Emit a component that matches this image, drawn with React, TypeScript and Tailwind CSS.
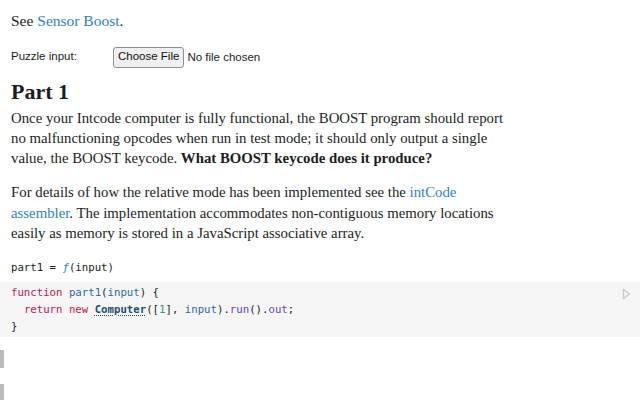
export default function App() {
  return (
    <div className="w-[640px] h-[400px] overflow-hidden bg-white text-[#1b1e23]">
      <div className="px-[11px] font-['Liberation_Serif',serif]">
        <p className="pt-[11px] text-[15.5px] leading-[20px]">
          See <a className="text-[#3182bd]">Sensor Boost</a>.
        </p>
        <div className="mt-[15px] flex items-center h-[22px] font-['Liberation_Sans',sans-serif] text-[11.5px]">
          <label className="w-[102px]">Puzzle input:</label>
          <input
            type="file"
            className="text-[11.5px] font-['Liberation_Sans',sans-serif] file:mr-[3px] file:h-[21px] file:px-[4px] file:border file:border-[#8f8f8f] file:rounded-[3px] file:bg-[#efefef] file:text-[#111]"
          />
        </div>
        <h2 className="mt-[10px] text-[22px] leading-[28px] font-bold">Part 1</h2>
        <p className="mt-[2px] text-[14.8px] leading-[20px] whitespace-nowrap">
          Once your Intcode computer is fully functional, the BOOST program should report
          <br />
          no malfunctioning opcodes when run in test mode; it should only output a single
          <br />
          value, the BOOST keycode. <b>What BOOST keycode does it produce?</b>
        </p>
        <p className="mt-[14px] text-[14.8px] leading-[20.5px] whitespace-nowrap">
          For details of how the relative mode has been implemented see the{' '}
          <a className="text-[#3182bd]">intCode</a>
          <br />
          <a className="text-[#3182bd]">assembler</a>. The implementation accommodates non-contiguous memory locations
          <br />
          easily as memory is stored in a JavaScript associative array.
        </p>
      </div>
      <div className="font-['DejaVu_Sans_Mono',monospace] text-[10.7px]">
        <div className="mt-[14px] px-[11px] leading-[20px]">
          part1 = <span className="text-[#3182bd] italic">ƒ</span>(input)
        </div>
        <div className="relative mt-[4px] bg-[#f5f5f5] px-[11px] py-[2px] leading-[17px] whitespace-pre">
          <div>
            <span className="text-[#c2185b]">function</span> <span className="text-[#2c6b9e]">part1</span>(
            <span className="text-[#2c6b9e]">input</span>) {'{'}
          </div>
          <div>
            {'  '}
            <span className="text-[#c2185b]">return</span> <span className="text-[#c2185b]">new</span>{' '}
            <span className="font-bold text-[#1f4e6b] underline decoration-dotted decoration-[#1f4e6b] underline-offset-2">
              Computer
            </span>
            ([<span className="text-[#2a9d8f]">1</span>], <span className="text-[#2c6b9e]">input</span>).
            <span className="text-[#6f42c1]">run</span>().<span className="text-[#6f42c1]">out</span>;
          </div>
          <div>{'}'}</div>
          <svg className="absolute right-[9px] top-[6px]" width="9" height="12" viewBox="0 0 9 12">
            <path d="M1.5 1.5 L7.5 6 L1.5 10.5 Z" fill="none" stroke="#c8c8c8" strokeWidth="1.4" strokeLinejoin="round" />
          </svg>
        </div>
        <div className="mt-[13px] w-[4px] h-[18px] bg-[#b7b9bd]" />
        <div className="mt-[16px] w-[4px] h-[18px] bg-[#b7b9bd]" />
      </div>
    </div>
  );
}
